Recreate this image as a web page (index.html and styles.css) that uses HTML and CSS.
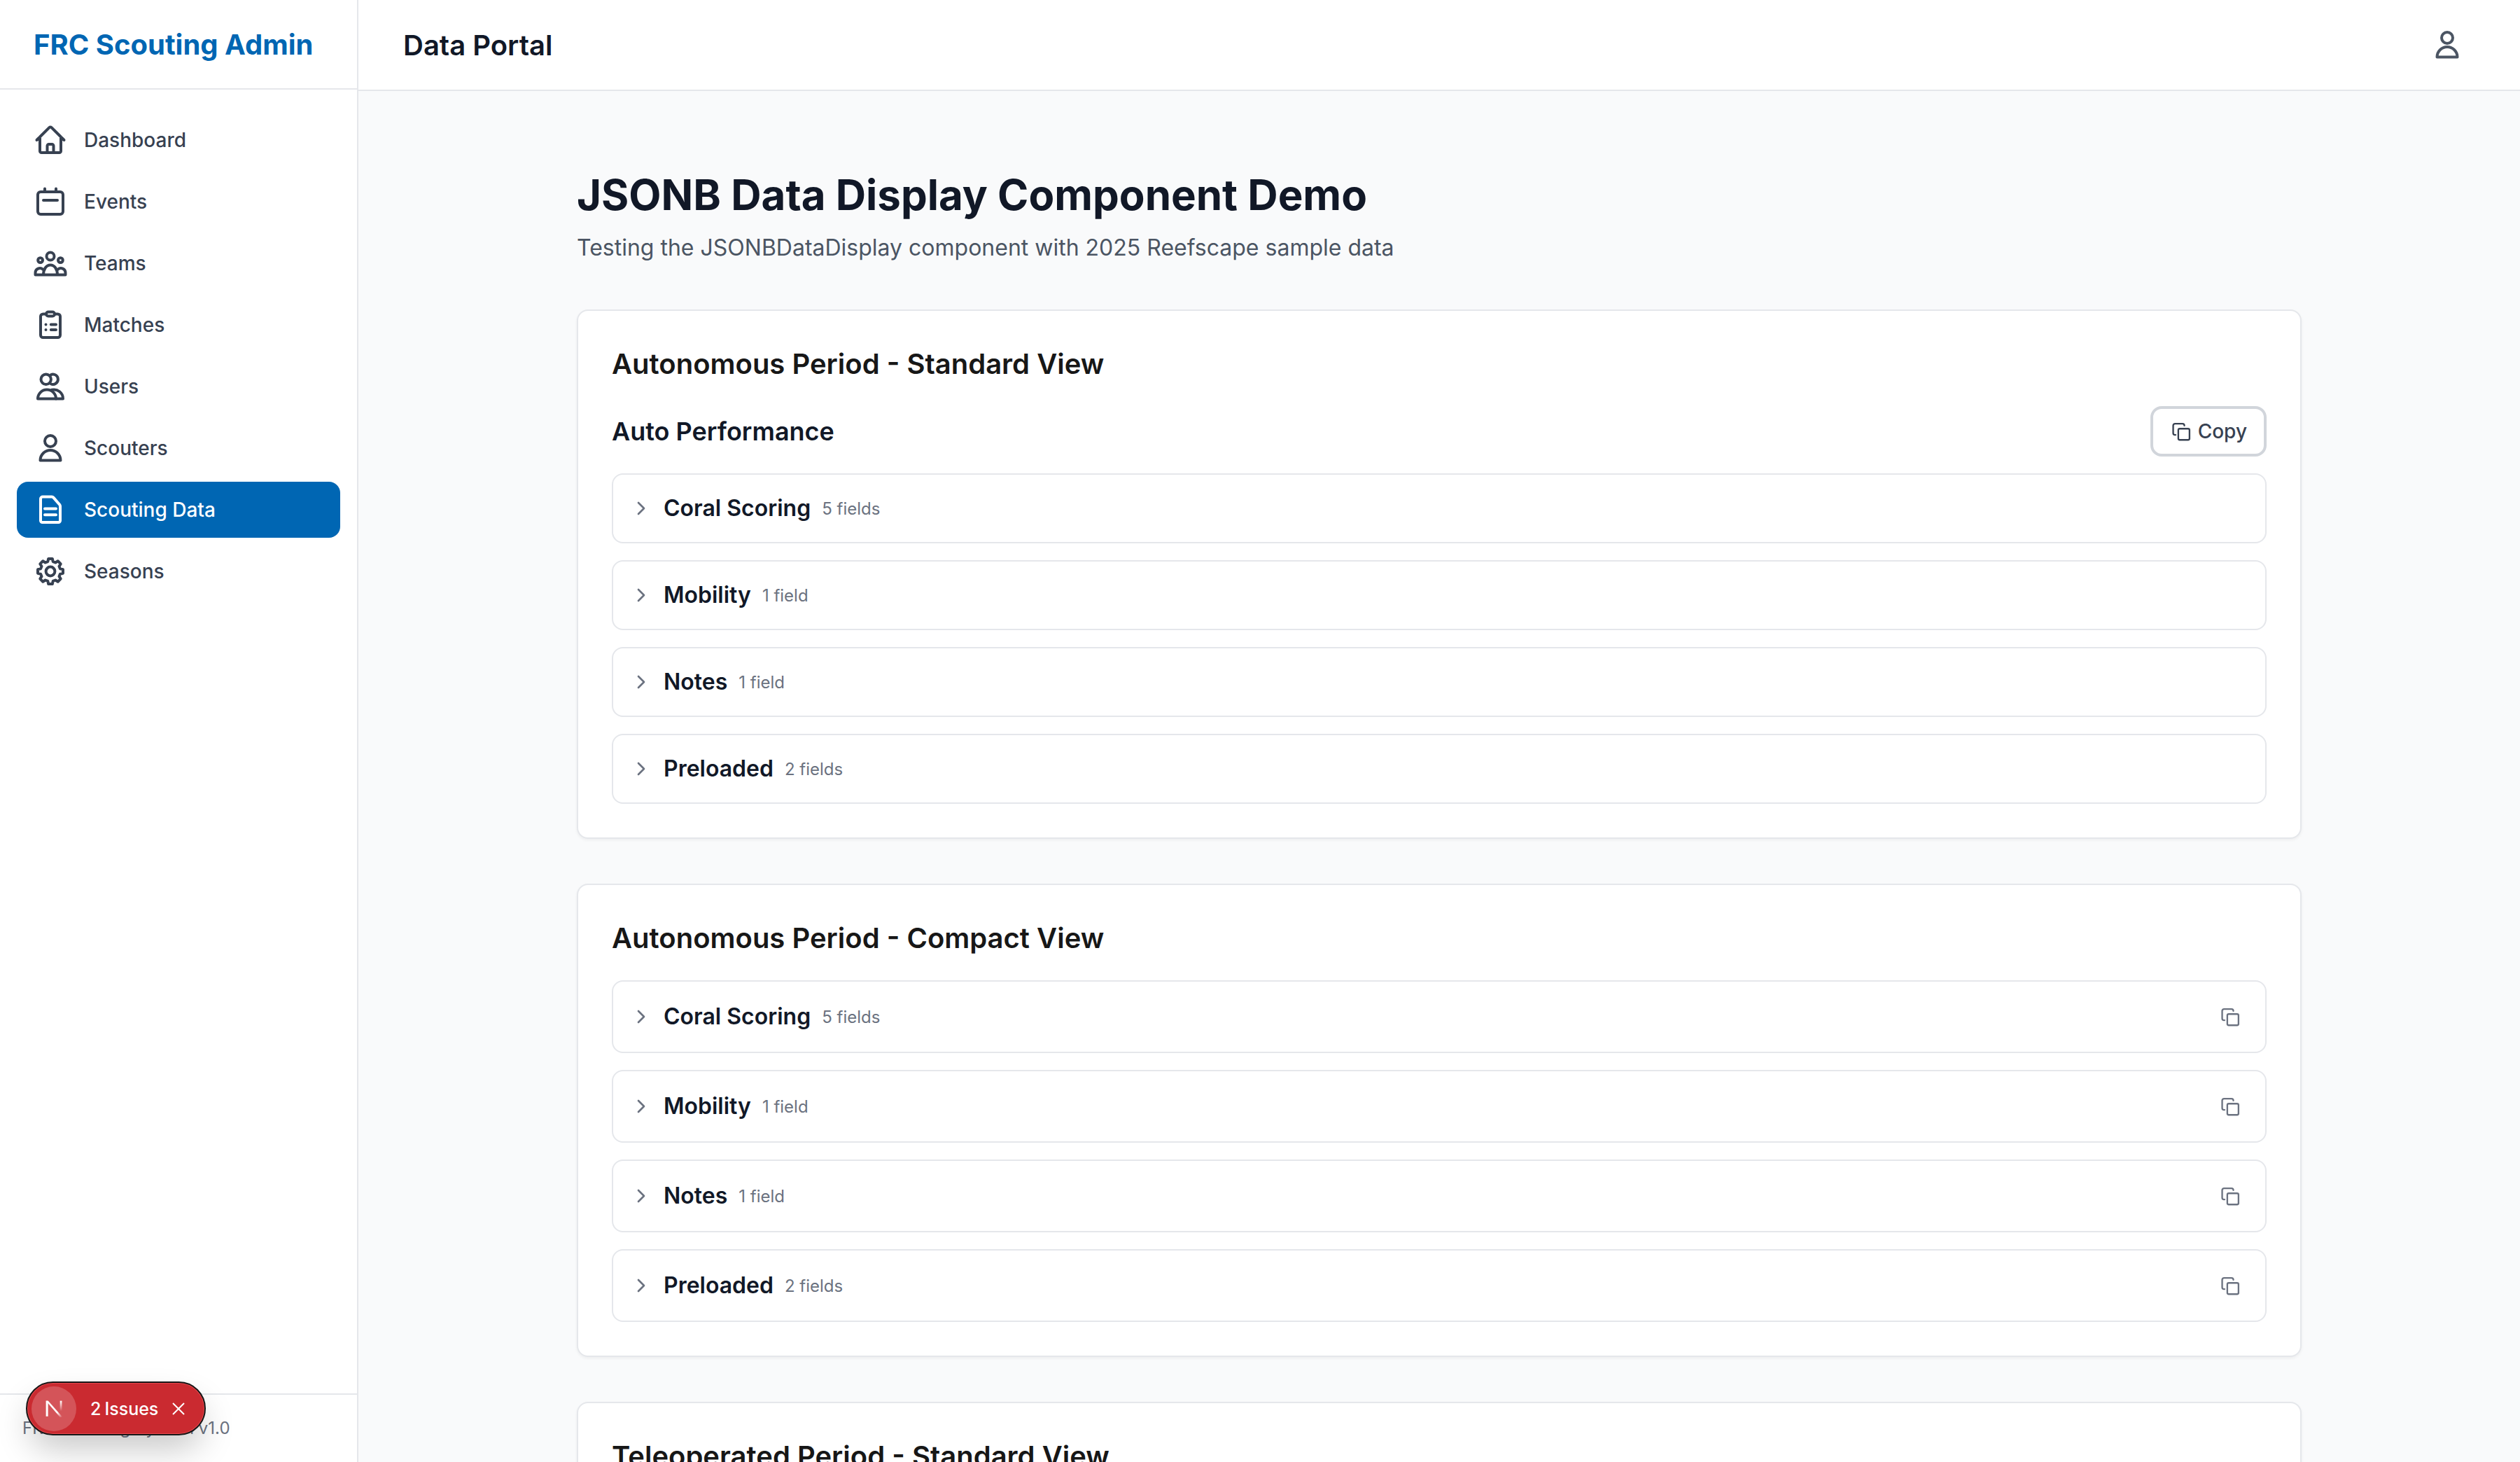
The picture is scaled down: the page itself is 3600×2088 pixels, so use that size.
FILE: index.html
```html
<!DOCTYPE html>
<html lang="en">
<head>
  <meta charset="UTF-8">
  <title>Data Portal</title>
  <link rel="stylesheet" href="styles.css">
</head>
<body>

<svg class="defs" aria-hidden="true">
  <defs>
    <symbol id="i-copy" viewBox="0 0 24 24"><rect x="8.9" y="9.2" width="12" height="12" rx="1.5"/><path d="M15.4 5.8a2 2 0 0 0-2-2h-8a2 2 0 0 0-2 2v8a2 2 0 0 0 2 2H6"/></symbol>
    <symbol id="i-chevron" viewBox="0 0 24 24"><path d="m9 18 6-6-6-6"/></symbol>
    <symbol id="i-user" viewBox="0 0 24 24"><circle cx="12" cy="7" r="4"/><path d="M4.75 20.75a7.25 7.25 0 0 1 14.5 0z"/></symbol>
  </defs>
</svg>

<aside class="sidebar">
  <div class="brand">FRC Scouting Admin</div>
  <nav class="nav">
    <a class="nav-item">
      <svg class="icon" viewBox="0 0 24 24"><path d="m2.25 12 8.954-8.955c.44-.439 1.152-.439 1.591 0L21.75 12M4.5 9.75v10.125c0 .621.504 1.125 1.125 1.125H9.75v-4.875c0-.621.504-1.125 1.125-1.125h2.25c.621 0 1.125.504 1.125 1.125V21h4.125c.621 0 1.125-.504 1.125-1.125V9.75M8.25 21h8.25"/></svg>
      Dashboard
    </a>
    <a class="nav-item">
      <svg class="icon" viewBox="0 0 24 24"><rect x="3" y="5" width="18" height="16" rx="2"/><path d="M8 2.75V5M16 2.75V5M7 11h10"/></svg>
      Events
    </a>
    <a class="nav-item">
      <svg class="icon" viewBox="0 0 24 24"><circle cx="12" cy="7" r="2.75"/><circle cx="4.8" cy="9.8" r="1.7"/><circle cx="19.2" cy="9.8" r="1.7"/><path d="M7 20.25c0-4 2-7 5-7s5 3 5 7M1.25 20.25h21.5M1.25 20.25v-1.5a3.25 3.25 0 0 1 5.4-2.4M22.75 20.25v-1.5a3.25 3.25 0 0 0-5.4-2.4"/></svg>
      Teams
    </a>
    <a class="nav-item">
      <svg class="icon" viewBox="0 0 24 24"><path d="M9 4.25H6.75A1.75 1.75 0 0 0 5 6v13.25C5 20.2 5.8 21 6.75 21h10.5c.95 0 1.75-.8 1.75-1.75V6a1.75 1.75 0 0 0-1.75-1.75H15"/><rect x="9" y="2.75" width="6" height="3" rx="1.5"/><path d="M12.4 11.7H16M12.4 15.5H16M8.75 11.7h.01M8.75 15.5h.01"/></svg>
      Matches
    </a>
    <a class="nav-item">
      <svg class="icon" viewBox="0 0 24 24"><circle cx="8.85" cy="6.85" r="3.6"/><path d="M12.3 3.6a3.6 3.6 0 1 1 0 6.5"/><path d="M3 20.75a6.5 6.5 0 0 1 13 0z"/><path d="M13 14.4a6.5 6.5 0 0 1 8 6.35h-5"/></svg>
      Users
    </a>
    <a class="nav-item">
      <svg class="icon" viewBox="0 0 24 24"><use href="#i-user"/></svg>
      Scouters
    </a>
    <a class="nav-item active">
      <svg class="icon" viewBox="0 0 24 24"><path d="M13 2.75H6.5A1.5 1.5 0 0 0 5 4.25v15.5a1.25 1.25 0 0 0 1.25 1.25h11.5A1.25 1.25 0 0 0 19 19.75V9.5c0-.4-.15-.8-.4-1.1l-4.4-5.1a1.6 1.6 0 0 0-1.2-.55z"/><path d="M8 11.3h8M8 15.6h8"/></svg>
      Scouting Data
    </a>
    <a class="nav-item">
      <svg class="icon" viewBox="0 0 24 24"><path d="M10.58 3.01h2.84l.44 2.04 1.74.71 1.75-1.12 2.01 2.01-1.12 1.75.71 1.74 2.04.44v2.84l-2.04.44-.71 1.74 1.12 1.75-2.01 2.01-1.75-1.12-1.74.71-.44 2.04h-2.84l-.44-2.04-1.74-.71-1.75 1.12-2.01-2.01 1.12-1.75-.71-1.74-2.04-.44v-2.84l2.04-.44.71-1.74-1.12-1.75 2.01-2.01 1.75 1.12 1.74-.71z"/><circle cx="12" cy="12" r="3.2"/></svg>
      Seasons
    </a>
  </nav>
  <div class="sidebar-foot">FRC Scouting System v1.0</div>
</aside>

<div class="page">
  <header class="topbar">
    <div class="topbar-title">Data Portal</div>
    <svg class="icon user-icon" viewBox="0 0 24 24"><use href="#i-user"/></svg>
  </header>

  <main class="main">
    <div class="container">
      <h1>JSONB Data Display Component Demo</h1>
      <p class="subtitle">Testing the JSONBDataDisplay component with 2025 Reefscape sample data</p>

      <section class="card">
        <h2>Autonomous Period - Standard View</h2>
        <div class="data-head">
          <h3>Auto Performance</h3>
          <button class="copy-btn"><svg class="copy-icon" viewBox="0 0 24 24"><use href="#i-copy"/></svg>Copy</button>
        </div>
        <div class="rows">
          <div class="row"><svg class="chevron" viewBox="0 0 24 24"><use href="#i-chevron"/></svg><span class="row-name">Coral Scoring</span><span class="row-count">5 fields</span></div>
          <div class="row"><svg class="chevron" viewBox="0 0 24 24"><use href="#i-chevron"/></svg><span class="row-name">Mobility</span><span class="row-count">1 field</span></div>
          <div class="row"><svg class="chevron" viewBox="0 0 24 24"><use href="#i-chevron"/></svg><span class="row-name">Notes</span><span class="row-count">1 field</span></div>
          <div class="row"><svg class="chevron" viewBox="0 0 24 24"><use href="#i-chevron"/></svg><span class="row-name">Preloaded</span><span class="row-count">2 fields</span></div>
        </div>
      </section>

      <section class="card">
        <h2>Autonomous Period - Compact View</h2>
        <div class="rows">
          <div class="row"><svg class="chevron" viewBox="0 0 24 24"><use href="#i-chevron"/></svg><span class="row-name">Coral Scoring</span><span class="row-count">5 fields</span><button class="icon-btn"><svg class="copy-icon" viewBox="0 0 24 24"><use href="#i-copy"/></svg></button></div>
          <div class="row"><svg class="chevron" viewBox="0 0 24 24"><use href="#i-chevron"/></svg><span class="row-name">Mobility</span><span class="row-count">1 field</span><button class="icon-btn"><svg class="copy-icon" viewBox="0 0 24 24"><use href="#i-copy"/></svg></button></div>
          <div class="row"><svg class="chevron" viewBox="0 0 24 24"><use href="#i-chevron"/></svg><span class="row-name">Notes</span><span class="row-count">1 field</span><button class="icon-btn"><svg class="copy-icon" viewBox="0 0 24 24"><use href="#i-copy"/></svg></button></div>
          <div class="row"><svg class="chevron" viewBox="0 0 24 24"><use href="#i-chevron"/></svg><span class="row-name">Preloaded</span><span class="row-count">2 fields</span><button class="icon-btn"><svg class="copy-icon" viewBox="0 0 24 24"><use href="#i-copy"/></svg></button></div>
        </div>
      </section>

      <section class="card">
        <h2>Teleoperated Period - Standard View</h2>
      </section>
    </div>
  </main>
</div>

<!-- dev tools badge, floats over the sidebar -->
<div class="issues-badge">
  <span class="badge-logo">
    <svg viewBox="0 0 24 24" width="26" height="26">
      <defs>
        <linearGradient id="n-fade" x1="0" y1="0" x2="0" y2="1"><stop offset="0" stop-color="#fff"/><stop offset="1" stop-color="#fff" stop-opacity="0"/></linearGradient>
        <linearGradient id="n-diag" gradientUnits="userSpaceOnUse" x1="2" y1="1" x2="23" y2="23"><stop offset=".7" stop-color="#fff"/><stop offset="1" stop-color="#fff" stop-opacity="0"/></linearGradient>
      </defs>
      <path d="M1.5 1.5h2.8V22H1.5z" fill="#fff"/>
      <path d="M1.5 1.5h3L23.5 23h-3.4z" fill="url(#n-diag)"/>
      <path d="M20 1.5h2.6V15H20z" fill="url(#n-fade)"/>
    </svg>
  </span>
  <span class="badge-text"><span>2</span><span>Issues</span></span>
  <svg class="badge-close" viewBox="0 0 18 18" width="18" height="18"><path d="M1 1l16 16M17 1 1 17"/></svg>
</div>

</body>
</html>
```

FILE: styles.css
```css
* {
  box-sizing: border-box;
}

html, body {
  height: 100%;
}

body {
  margin: 0;
  display: flex;
  overflow: hidden;
  font-family: Inter, "Liberation Sans", sans-serif;
  background: #f9fafb;
  color: #111827;
}

.defs {
  display: none;
}

/* Sidebar */
.sidebar {
  width: 512px;
  flex-shrink: 0;
  display: flex;
  flex-direction: column;
  background: #fff;
  border-right: 2px solid #e5e7eb;
}

.brand {
  height: 128px;
  flex-shrink: 0;
  display: flex;
  align-items: center;
  padding-left: 48px;
  border-bottom: 2px solid #e5e7eb;
  font-size: 40px;
  font-weight: 700;
  color: #0066b3;
}

.nav {
  flex: 1;
  display: flex;
  flex-direction: column;
  gap: 8px;
  padding: 32px 24px;
}

.nav-item {
  height: 80px;
  display: flex;
  align-items: center;
  gap: 24px;
  padding: 0 24px;
  border-radius: 16px;
  font-size: 28px;
  font-weight: 500;
  color: #374151;
}

.nav-item.active {
  background: #0066b3;
  color: #fff;
}

.icon {
  width: 48px;
  height: 48px;
  flex-shrink: 0;
  fill: none;
  stroke: currentColor;
  stroke-width: 2;
  stroke-linecap: round;
  stroke-linejoin: round;
}

.sidebar-foot {
  height: 98px;
  flex-shrink: 0;
  padding: 32px;
  border-top: 2px solid #e5e7eb;
  font-size: 24px;
  line-height: 32px;
  color: #6b7280;
}

/* Top bar */
.page {
  flex: 1;
  min-width: 0;
  display: flex;
  flex-direction: column;
}

.topbar {
  height: 130px;
  flex-shrink: 0;
  display: flex;
  align-items: center;
  justify-content: space-between;
  padding: 0 80px 0 64px;
  background: #fff;
  border-bottom: 2px solid #e5e7eb;
}

.topbar-title {
  font-size: 40px;
  font-weight: 600;
}

.user-icon {
  color: #4b5563;
}

/* Main content */
.main {
  flex: 1;
  overflow: hidden;
}

.container {
  max-width: 2560px;
  margin: 0 auto;
  padding: 112px 48px 0;
}

h1 {
  margin: 0 0 16px;
  font-size: 60px;
  line-height: 72px;
  font-weight: 700;
}

.subtitle {
  margin: 0 0 64px;
  font-size: 32px;
  line-height: 48px;
  color: #4b5563;
}

.card {
  margin-bottom: 64px;
  padding: 48px;
  background: #fff;
  border: 2px solid #e5e7eb;
  border-radius: 16px;
  box-shadow: 0 2px 4px rgba(0, 0, 0, 0.05);
}

h2 {
  margin: 0 0 32px;
  font-size: 40px;
  line-height: 56px;
  font-weight: 600;
  color: #171717;
}

.data-head {
  display: flex;
  align-items: center;
  justify-content: space-between;
  margin-bottom: 24px;
}

h3 {
  margin: 0;
  font-size: 36px;
  line-height: 56px;
  font-weight: 600;
}

.copy-btn {
  height: 72px;
  display: flex;
  align-items: center;
  gap: 8px;
  padding: 0 24px;
  background: #fff;
  border: 4px solid #d1d5db;
  border-radius: 16px;
  font-family: inherit;
  font-size: 28px;
  font-weight: 500;
  color: #374151;
}

.copy-icon {
  width: 32px;
  height: 32px;
  fill: none;
  stroke: currentColor;
  stroke-width: 1.75;
  stroke-linecap: round;
  stroke-linejoin: round;
}

.rows {
  display: flex;
  flex-direction: column;
  gap: 24px;
}

.row {
  display: flex;
  align-items: center;
  padding: 24px;
  background: #fff;
  border: 2px solid #e5e7eb;
  border-radius: 16px;
}

.chevron {
  width: 32px;
  height: 32px;
  margin-right: 16px;
  fill: none;
  stroke: #6b7280;
  stroke-width: 2;
  stroke-linecap: round;
  stroke-linejoin: round;
}

.row-name {
  font-size: 32px;
  line-height: 48px;
  font-weight: 600;
}

.row-count {
  margin-left: 16px;
  font-size: 24px;
  color: #6b7280;
}

.icon-btn {
  margin-left: auto;
  display: flex;
  padding: 8px;
  background: none;
  border: 2px solid transparent;
  border-radius: 8px;
  color: #6b7280;
}

/* Issues badge */
.issues-badge {
  position: absolute;
  left: 38px;
  top: 1974px;
  width: 255px;
  height: 75px;
  display: flex;
  align-items: center;
  padding-left: 5px;
  background: #ca2a30;
  border: 2px solid #e5484d;
  outline: 2px solid #171717;
  outline-offset: -1px;
  border-radius: 38px;
  box-shadow: 0 24px 48px -4px rgba(0, 0, 0, 0.22);
  color: #fff;
}

.badge-logo {
  width: 64px;
  height: 64px;
  flex-shrink: 0;
  display: flex;
  align-items: center;
  justify-content: center;
  border-radius: 50%;
  background: rgba(255, 255, 255, 0.2);
}

.badge-text {
  display: flex;
  gap: 5px;
  margin-left: 20px;
  font-size: 25px;
  font-weight: 500;
}

.badge-close {
  margin-left: 20px;
  fill: none;
  stroke: #fff;
  stroke-width: 2;
}
```
